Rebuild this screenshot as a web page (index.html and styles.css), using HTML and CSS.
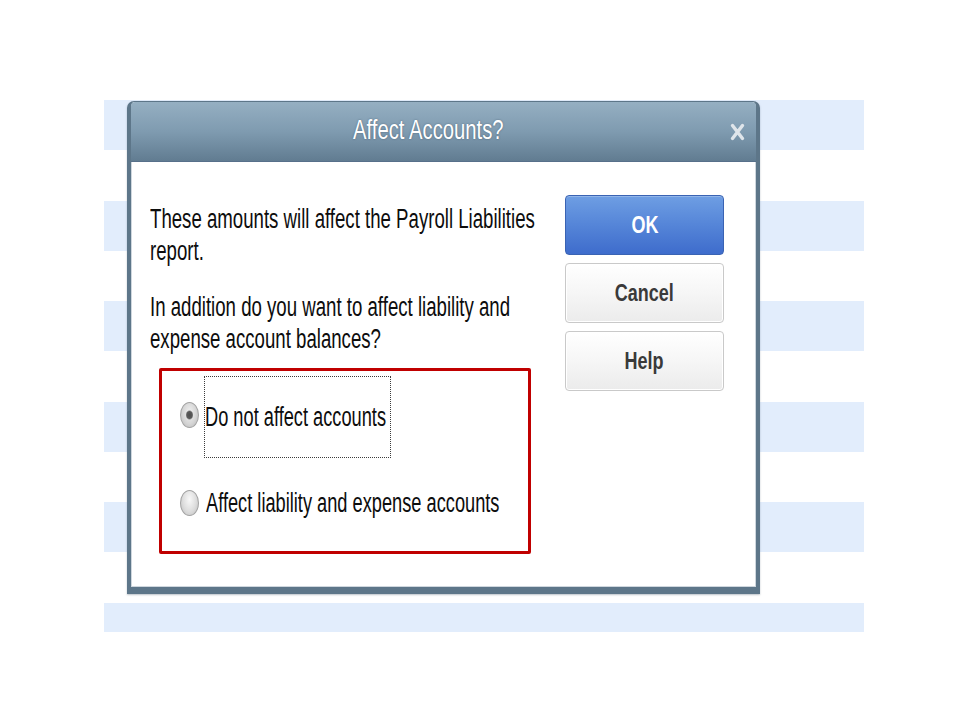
FILE: index.html
```html
<!DOCTYPE html>
<html lang="en">
<head>
<meta charset="utf-8">
<title>Affect Accounts?</title>
<link rel="stylesheet" href="styles.css">
</head>
<body>
<div class="stage">
  <div class="stripes"></div>
  <div class="dialog">
    <div class="titlebar">
      <div class="title"><span class="sq tt">Affect Accounts?</span></div>
      <svg class="close" width="15" height="18" viewBox="0 0 15 18" aria-hidden="true">
        <path d="M2.5 2.5 L12.5 15.5 M12.5 2.5 L2.5 15.5" stroke="#dfe5ea" stroke-width="3.4" stroke-linecap="round"/>
      </svg>
    </div>
    <div class="content">
      <div class="main">
        <p class="msg first"><span class="sq">These amounts will affect the Payroll Liabilities<br>report.</span></p>
        <p class="msg"><span class="sq">In addition do you want to affect liability and<br>expense account balances?</span></p>
        <div class="choices">
          <div class="opt">
            <span class="radio on"></span>
            <span class="focus"><span class="sq ot">Do not affect accounts</span></span>
          </div>
          <div class="opt opt2">
            <span class="radio"></span>
            <span class="lbl"><span class="sq ot">Affect liability and expense accounts</span></span>
          </div>
        </div>
      </div>
      <div class="buttons">
        <button class="btn ok"><span class="sq bt">OK</span></button>
        <button class="btn"><span class="sq bt">Cancel</span></button>
        <button class="btn"><span class="sq bt">Help</span></button>
      </div>
    </div>
  </div>
</div>
</body>
</html>
```

FILE: styles.css
```css
html, body {
  margin: 0;
  padding: 0;
  background: #ffffff;
}

.stage {
  position: relative;
  width: 960px;
  height: 720px;
  box-sizing: border-box;
  padding: 100px 0 0 104px;
  font-family: "Liberation Sans", Arial, sans-serif;
  color: #0d0d0d;
}

.stripes {
  width: 760px;
  height: 532px;
  background: repeating-linear-gradient(to bottom, #e2edfc 0, #e2edfc 50px, #ffffff 50px, #ffffff 100.6px);
}

.dialog {
  position: absolute;
  left: 127px;
  top: 101px;
  width: 633px;
  height: 493px;
  box-sizing: border-box;
  border: 4px solid #5d7689;
  border-top-width: 1px;
  border-bottom-width: 7px;
  border-radius: 7px 7px 0 0;
  background: #ffffff;
  display: flex;
  flex-direction: column;
  box-shadow: 0 1px 2px rgba(60, 80, 100, 0.35);
}

.titlebar {
  height: 59px;
  flex: none;
  display: flex;
  align-items: center;
  background: linear-gradient(to bottom, #95afc2 0%, #7f9bb0 50%, #617c91 100%);
  border-radius: 4px 4px 0 0;
  border-bottom: 1px solid #57708a;
}

.title {
  flex: 1;
  text-align: center;
  line-height: 30px;
  padding-right: 4px;
}

.sq {
  display: inline-block;
  white-space: nowrap;
  transform: scaleX(0.69);
  transform-origin: 0 50%;
}

.tt {
  font-size: 27px;
  color: #ffffff;
  text-shadow: 0 0 2px rgba(40, 60, 80, 0.6);
  transform: scaleX(0.75);
  transform-origin: 50% 50%;
}

.close {
  flex: none;
  margin-right: 11px;
}

.content {
  flex: 1;
  display: flex;
  padding: 33px 31px 0 18px;
  border: 1px solid #cfd7de;
  border-top: 0;
}

.main {
  flex: 1;
  min-width: 0;
}

.msg {
  margin: 24px 0 0;
  font-size: 27px;
  line-height: 32px;
}

.msg.first {
  margin-top: 8px;
}

.choices {
  margin: 13px 0 0 9px;
  width: 372px;
  height: 186px;
  box-sizing: border-box;
  border: 3px solid #c00000;
  border-radius: 2px;
  padding: 5px 0 0 18px;
}

.opt {
  height: 82px;
  display: flex;
  align-items: center;
  font-size: 27px;
}

.opt2 {
  margin-top: 4px;
}

.ot {
  transform: scaleX(0.675);
}

.radio {
  flex: none;
  width: 19px;
  height: 26px;
  box-sizing: border-box;
  border-radius: 50%;
  border: 1px solid #a3a3a3;
  background: radial-gradient(ellipse at 50% 35%, #f8f8f8 0%, #dddddd 55%, #bdbdbd 100%);
}

.radio.on {
  margin-top: -4px;
  background:
    radial-gradient(ellipse 4px 5px at 50% 50%, #4d4d4d 0%, #5a5a5a 70%, rgba(90, 90, 90, 0) 100%),
    radial-gradient(ellipse at 50% 40%, #f1f1f1 0%, #d6d6d6 55%, #b5b5b5 100%);
}

.focus {
  margin-left: 5px;
  width: 187px;
  height: 82px;
  flex: none;
  box-sizing: border-box;
  border: 1px dotted #3c3c3c;
  padding-left: 0;
  display: flex;
  align-items: center;
}

.lbl {
  margin-left: 7px;
}

.buttons {
  flex: none;
  width: 159px;
  display: flex;
  flex-direction: column;
  gap: 8px;
}

.btn {
  height: 60px;
  padding: 0;
  border: 1px solid #c9c9c9;
  border-radius: 4px;
  background: linear-gradient(to bottom, #ffffff 0%, #f6f6f6 50%, #ebebeb 100%);
  box-shadow: inset 0 0 0 1px #ffffff;
  font-family: "Liberation Sans", Arial, sans-serif;
  font-weight: bold;
  font-size: 24px;
  color: #3a3a3a;
  text-align: center;
}

.bt {
  transform: scaleX(0.75);
  transform-origin: 50% 50%;
}

.btn.ok {
  border-color: #3a63b3;
  background: linear-gradient(to bottom, #6e9ee3 0%, #5585d8 50%, #3e6ccc 100%);
  box-shadow: inset 0 1px 0 rgba(255, 255, 255, 0.25);
  color: #ffffff;
}
```
